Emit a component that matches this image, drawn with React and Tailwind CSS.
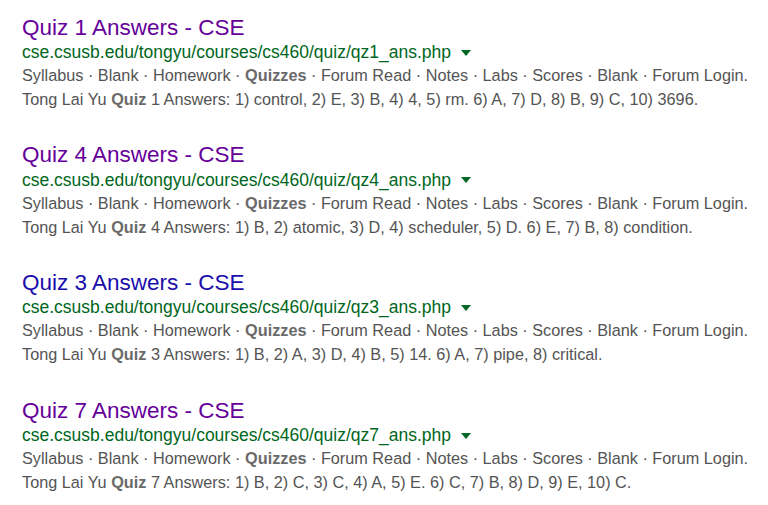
const results = [
  {
    title: 'Quiz 1 Answers - CSE',
    visited: true,
    url: 'cse.csusb.edu/tongyu/courses/cs460/quiz/qz1_ans.php',
    num: '1',
    answers: 'Answers: 1) control, 2) E, 3) B, 4) 4, 5) rm. 6) A, 7) D, 8) B, 9) C, 10) 3696.',
  },
  {
    title: 'Quiz 4 Answers - CSE',
    visited: true,
    url: 'cse.csusb.edu/tongyu/courses/cs460/quiz/qz4_ans.php',
    num: '4',
    answers: 'Answers: 1) B, 2) atomic, 3) D, 4) scheduler, 5) D. 6) E, 7) B, 8) condition.',
  },
  {
    title: 'Quiz 3 Answers - CSE',
    visited: false,
    url: 'cse.csusb.edu/tongyu/courses/cs460/quiz/qz3_ans.php',
    num: '3',
    answers: 'Answers: 1) B, 2) A, 3) D, 4) B, 5) 14. 6) A, 7) pipe, 8) critical.',
  },
  {
    title: 'Quiz 7 Answers - CSE',
    visited: true,
    url: 'cse.csusb.edu/tongyu/courses/cs460/quiz/qz7_ans.php',
    num: '7',
    answers: 'Answers: 1) B, 2) C, 3) C, 4) A, 5) E. 6) C, 7) B, 8) D, 9) E, 10) C.',
  },
];

function Result({ r }) {
  return (
    <div className="mb-[30.2px]">
      <a
        href="#"
        className={`block text-[22.5px] leading-[27px] ${r.visited ? 'text-[#660099]' : 'text-[#1a0dab]'}`}
      >
        {r.title}
      </a>
      <div className="mt-[0.5px] flex items-center text-[17.5px] leading-[22px] text-[#006621]">
        <span>{r.url}</span>
        <span className="ml-[10px] mt-[1px] inline-block h-0 w-0 border-x-[5px] border-t-[6px] border-x-transparent border-t-[#006621]" />
      </div>
      <p className="whitespace-nowrap text-[16.25px] leading-[24px] text-[#545454]">
        Syllabus · Blank · Homework · <b className="text-[#6a6a6a]">Quizzes</b> · Forum Read · Notes · Labs · Scores · Blank · Forum Login.
        <br />
        Tong Lai Yu <b className="text-[#6a6a6a]">Quiz</b> {r.num} {r.answers}
      </p>
    </div>
  );
}

export default function App() {
  return (
    <div className="min-h-screen bg-white pl-[22px] pt-[13.5px] font-['Liberation_Sans',Arial,sans-serif]">
      {results.map((r) => (
        <Result key={r.title} r={r} />
      ))}
    </div>
  );
}
